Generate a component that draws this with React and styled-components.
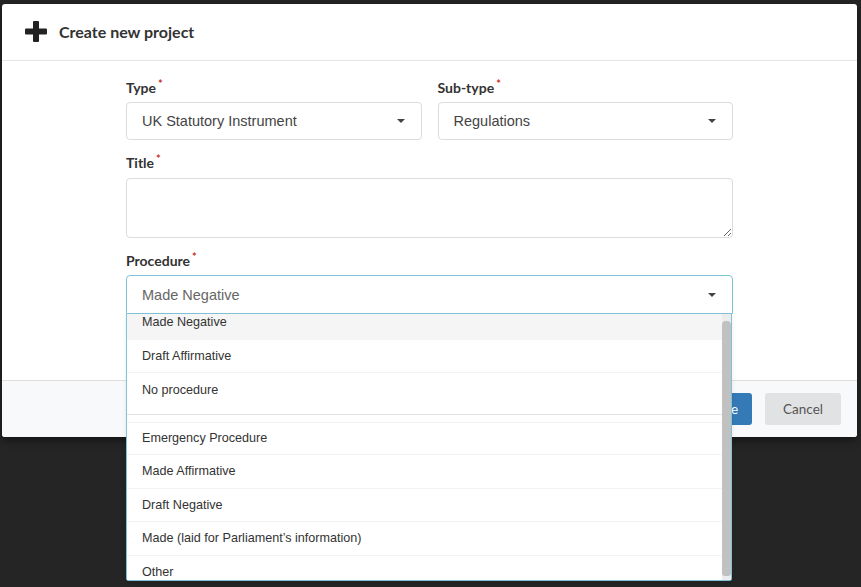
import React, { useLayoutEffect, useRef } from 'react';
import styled, { createGlobalStyle } from 'styled-components';

const Global = createGlobalStyle`
  html, body {
    margin: 0;
    padding: 0;
    background: #252525;
    height: 100%;
  }
  body {
    font-family: Lato, "Liberation Sans", Arial, sans-serif;
    overflow: hidden;
  }
  * { box-sizing: border-box; }
`;

const Page = styled.div`
  width: 861px;
  height: 587px;
  padding: 4px 4px 0 2px;
`;

const Modal = styled.div`
  width: 855px;
  background: #fff;
  border-radius: 3px;
  box-shadow: 0 3px 9px rgba(0, 0, 0, 0.5);
`;

const Header = styled.div`
  height: 57px;
  display: flex;
  align-items: center;
  gap: 12px;
  padding: 0 22px 1px 23px;
  border-bottom: 1px solid #e5e5e5;
`;

const Title = styled.h4`
  margin: 0;
  font-family: Lato, sans-serif;
  font-size: 16px;
  font-weight: 700;
  color: #333;
`;

const Body = styled.div`
  width: 607px;
  margin: 0 auto;
  padding: 18px 0 66px;
  display: flex;
  flex-direction: column;
  gap: 14px;
`;

const Row = styled.div`
  display: grid;
  grid-template-columns: 1fr 1fr;
  gap: 16px;
`;

const Field = styled.div`
  position: relative;
  display: flex;
  flex-direction: column;
`;

const Label = styled.label`
  font-family: Lato, sans-serif;
  font-size: 14px;
  font-weight: 700;
  color: #333;
  line-height: 18px;
  margin-bottom: ${p => (p.$tight ? 6 : 5)}px;
  display: flex;
  align-items: flex-start;
  gap: 2px;
`;

const Star = styled.span`
  color: #c9302c;
  font-size: 11px;
  line-height: 11px;
  margin-top: -1px;
`;

const Select = styled.div`
  height: ${p => (p.$open ? 39 : 38)}px;
  display: flex;
  align-items: center;
  justify-content: space-between;
  padding: 0 16px 0 15px;
  border: 1px solid ${p => (p.$open ? '#7fc3d9' : '#dcdcdc')};
  border-radius: ${p => (p.$open ? '4px 4px 0 0' : '4px')};
  font-family: "Liberation Sans", Arial, sans-serif;
  font-size: 14.5px;
  color: ${p => (p.$open ? '#666' : '#444')};
  background: #fff;
`;

const Caret = styled.span`
  width: 0;
  height: 0;
  border-left: 4px solid transparent;
  border-right: 4px solid transparent;
  border-top: 4px solid #444;
`;

const TextArea = styled.textarea`
  height: 60px;
  border: 1px solid #dcdcdc;
  border-radius: 4px;
  resize: vertical;
  font-family: "Liberation Sans", Arial, sans-serif;
  font-size: 14px;
  padding: 8px 15px;
  outline: none;
`;

const Menu = styled.div`
  position: absolute;
  top: 100%;
  left: 0;
  right: 1px;
  height: 267px;
  display: flex;
  background: #fff;
  border: 1px solid #7fc3d9;
  border-top: none;
  border-radius: 0 0 3px 3px;
  z-index: 10;
  box-shadow: 0 2px 4px rgba(0, 0, 0, 0.08);
`;

const List = styled.div`
  flex: 1;
  overflow: hidden;
`;

const Option = styled.div`
  height: 33.5px;
  display: flex;
  align-items: center;
  padding: 0 15px;
  font-family: "Liberation Sans", Arial, sans-serif;
  font-size: 12.6px;
  color: #333;
  background: ${p => (p.$active ? '#f5f5f5' : '#fff')};
  border-bottom: ${p => (p.$last ? 'none' : '1px solid #f3f3f3')};
  border-top: ${p => (p.$first ? '1px solid #f3f3f3' : 'none')};
`;

const Divider = styled.div`
  height: 1px;
  background: #e3e3e3;
  margin: 7px 0 7px;
`;

const Track = styled.div`
  width: 9px;
  background: #ececec;
  padding: 7px 0 4px;
  display: flex;
`;

const Thumb = styled.div`
  flex: 1;
  background: #c1c1c1;
  border-radius: 4px 4px 3px 3px;
`;

const Footer = styled.div`
  height: 57px;
  border-top: 1px solid #dedede;
  background: #f8f9fb;
  border-radius: 0 0 3px 3px;
  display: flex;
  align-items: center;
  justify-content: flex-end;
  gap: 13px;
  padding: 0 16px 0 0;
`;

const Button = styled.button`
  height: 32px;
  padding: 0 ${p => (p.$primary ? 14 : 18)}px;
  border: none;
  border-radius: 3px;
  font-family: Lato, sans-serif;
  font-size: 13.5px;
  background: ${p => (p.$primary ? '#337ab7' : '#e1e2e4')};
  color: ${p => (p.$primary ? '#fff' : '#555')};
`;

const PlusIcon = () => (
  <svg width="22" height="21" viewBox="0 0 22 21">
    <rect x="8" y="0" width="6" height="21" rx="1" fill="#222" />
    <rect x="0" y="7.5" width="22" height="6" rx="1" fill="#222" />
  </svg>
);

const groupOne = ['Made Negative', 'Draft Affirmative', 'No procedure'];
const groupTwo = [
  'Emergency Procedure',
  'Made Affirmative',
  'Draft Negative',
  'Made (laid for Parliament\u2019s information)',
  'Other',
];

const Req = ({ children, tight }) => (
  <Label $tight={tight}>
    {children}
    <Star>*</Star>
  </Label>
);

export default function App() {
  const listRef = useRef(null);

  useLayoutEffect(() => {
    // menu is scrolled a little, first option is partly hidden
    if (listRef.current) listRef.current.scrollTop = 8;
  }, []);

  return (
    <Page>
      <Global />
      <Modal>
        <Header>
          <PlusIcon />
          <Title>Create new project</Title>
        </Header>
        <Body>
          <Row>
            <Field>
              <Req>Type</Req>
              <Select>
                UK Statutory Instrument
                <Caret />
              </Select>
            </Field>
            <Field>
              <Req>Sub-type</Req>
              <Select>
                Regulations
                <Caret />
              </Select>
            </Field>
          </Row>
          <Field>
            <Req tight>Title</Req>
            <TextArea />
          </Field>
          <Field>
            <Req>Procedure</Req>
            <Select $open>
              Made Negative
              <Caret />
            </Select>
            <Menu>
              <List ref={listRef}>
                {groupOne.map((o, i) => (
                  <Option key={o} $active={i === 0} $last={i === groupOne.length - 1}>
                    {o}
                  </Option>
                ))}
                <Divider />
                {groupTwo.map((o, i) => (
                  <Option key={o} $first={i === 0} $last={i === groupTwo.length - 1}>
                    {o}
                  </Option>
                ))}
              </List>
              <Track>
                <Thumb />
              </Track>
            </Menu>
          </Field>
        </Body>
        <Footer>
          <Button $primary>Create</Button>
          <Button>Cancel</Button>
        </Footer>
      </Modal>
    </Page>
  );
}
